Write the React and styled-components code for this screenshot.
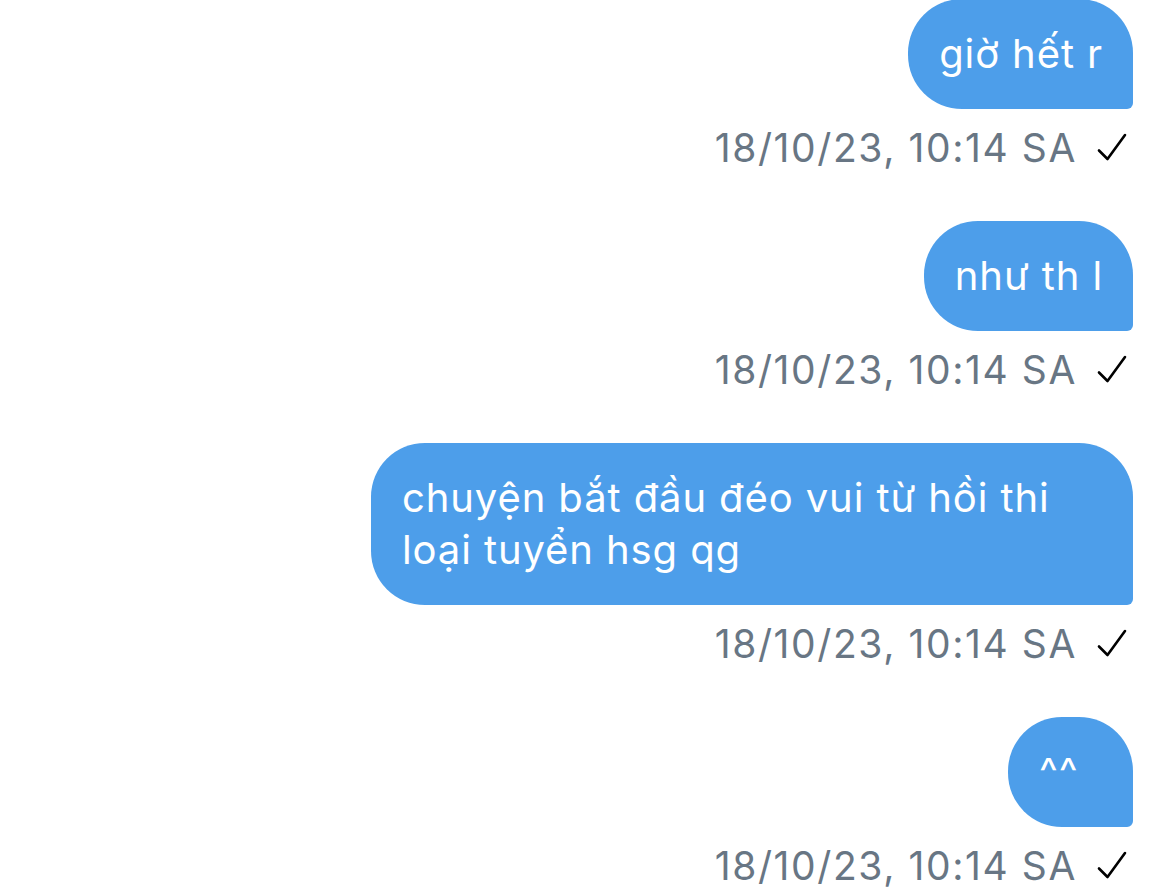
import React from "react";
import styled, { createGlobalStyle } from "styled-components";

const Global = createGlobalStyle`
  html, body { margin: 0; padding: 0; background: #ffffff; }
  body { font-family: Inter, "Noto Sans", "Liberation Sans", sans-serif; }
`;

const Thread = styled.div`
  width: 1170px;
  height: 895px;
  margin-top: -1px;
  overflow: hidden;
  box-sizing: border-box;
  padding-right: 37px;
  display: flex;
  flex-direction: column;
  align-items: flex-end;
  gap: 48px;
`;

const Group = styled.div`
  display: flex;
  flex-direction: column;
  align-items: flex-end;
`;

const Bubble = styled.div`
  box-sizing: border-box;
  max-width: 762px;
  min-width: ${(p) => (p.$short ? "125px" : "0")};
  padding: 29px 30px 29px 31px;
  background: #4d9eea;
  color: #ffffff;
  font-size: 40px;
  line-height: 52px;
  letter-spacing: 0.9px;
  border-radius: 54px 54px 6px 54px;
  white-space: pre-wrap;
  text-align: left;
`;

const Meta = styled.div`
  display: flex;
  align-items: center;
  gap: 20px;
  margin-top: 12px;
  padding-right: 6px;
  height: 52px;
  color: #687684;
  font-size: 39px;
  letter-spacing: 1.6px;
`;

const Check = () => (
  <svg width="30" height="28" viewBox="0 0 30 28" fill="none">
    <path d="M2 17.5 L10.5 26 L28 2" stroke="#000" strokeWidth="2.6" strokeLinecap="round" strokeLinejoin="round" />
  </svg>
);

const messages = [
  "giờ hết r",
  "như th l",
  "chuyện bắt đầu đéo vui từ hồi thi loại tuyển hsg qg",
  "^^",
];

export default function App() {
  return (
    <>
      <Global />
      <Thread>
        {messages.map((m, i) => (
          <Group key={i}>
            <Bubble $short={m.length < 4}>{m}</Bubble>
            <Meta>
              <span>18/10/23, 10:14 SA</span>
              <Check />
            </Meta>
          </Group>
        ))}
      </Thread>
    </>
  );
}
